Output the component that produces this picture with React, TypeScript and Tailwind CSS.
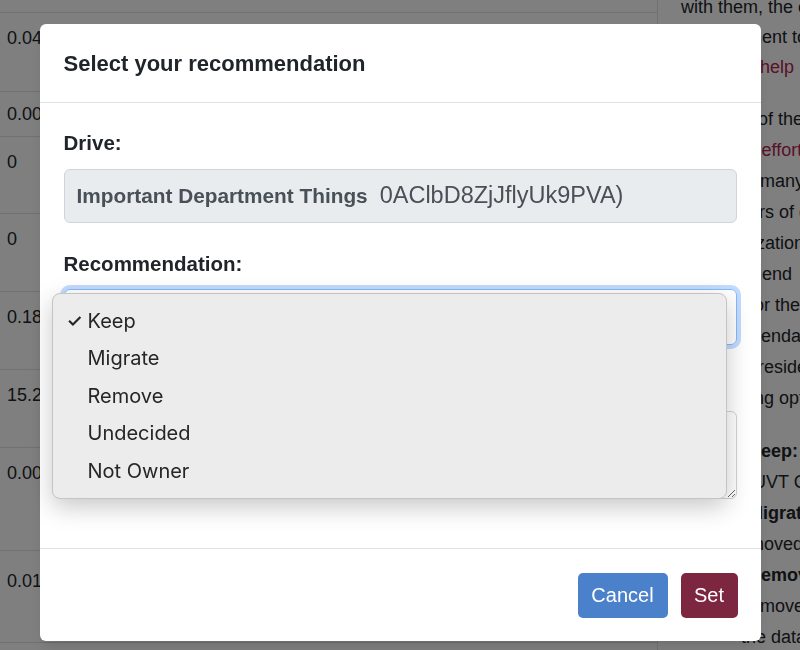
import React from "react";

const tableRows = [
  { value: "0.04", h: "h-[79px]", pt: "pt-[12px]" },
  { value: "0.00", h: "h-[45px]", pt: "pt-[9px]" },
  { value: "0", h: "h-[77px]", pt: "pt-[12px]" },
  { value: "0", h: "h-[78px]", pt: "pt-[12px]" },
  { value: "0.18", h: "h-[78px]", pt: "pt-[12px]" },
  { value: "15.2", h: "h-[78px]", pt: "pt-[12px]" },
  { value: "0.00", h: "h-[103px]", pt: "pt-[12px]" },
  { value: "0.01", h: "h-[92px]", pt: "pt-[17px]" },
];

type Line = { pre?: string; bold?: string; link?: string; indent?: boolean };

// side panel text, one entry per line
const helpParagraphs: Line[][] = [
  [
    { pre: "with them, the owners" },
    { pre: "a department to help" },
    { pre: "to ask for ", link: "help" },
  ],
  [
    { pre: "As a part of the" },
    { pre: "cleanup's ", link: "effort" },
    { pre: "for all the many" },
    { pre: "its numbers of drives" },
    { pre: "an organization" },
    { pre: "A recommend" },
    { pre: "options, for them" },
    { pre: "a recommendation" },
    { pre: "with the president" },
    { pre: "all following options" },
  ],
  [
    { pre: "Choose ", bold: "Keep:" },
    { pre: "Drive on UVT Cloud" },
    { pre: "Choose ", bold: "Migrate:" },
    { pre: "files are moved" },
    { pre: "Choose ", bold: "Remove:" },
    { pre: "this will remove" },
    { pre: "the data", indent: true },
  ],
];

const options = ["Keep", "Migrate", "Remove", "Undecided", "Not Owner"];

function BackgroundPage() {
  return (
    <div className="flex h-[650px] overflow-hidden bg-white font-['Liberation_Sans',sans-serif] text-[18px] text-[#212529]">
      <div className="w-[657px] shrink-0 pt-[12px]">
        <div className="border-t border-[#dee2e6]">
          {tableRows.map((row, i) => (
            <div key={i} className={`${row.h} ${row.pt} border-b border-[#dee2e6] pl-[7px] leading-[27px]`}>
              {row.value}
            </div>
          ))}
        </div>
      </div>
      <div className="flex-1 border-l border-[#dee2e6] pl-[23px] mt-[-8px] leading-[31px] whitespace-nowrap">
        {helpParagraphs.map((para, pi) => (
          <div key={pi} className={pi === 0 ? "mb-[22px] leading-[30px]" : "mb-[22px]"}>
            {para.map((line, li) => (
              <div key={li} className={line.indent ? "pl-[60px]" : ""}>
                {line.pre}
                {line.bold && <b>{line.bold}</b>}
                {line.link && <span className="text-[#b3244f]">{line.link}</span>}
              </div>
            ))}
          </div>
        ))}
      </div>
    </div>
  );
}

function Chevron() {
  return (
    <svg width="16" height="16" viewBox="0 0 16 16" fill="none" className="text-[#343a40]">
      <path d="M2 5l6 6 6-6" stroke="currentColor" strokeWidth="1.6" strokeLinecap="round" strokeLinejoin="round" />
    </svg>
  );
}

function RecommendationModal() {
  return (
    <div className="fixed inset-0 bg-black/50 font-['Liberation_Sans',sans-serif] text-[#212529]">
      <div className="mx-auto mt-[24px] w-[721px] rounded-[6px] bg-white shadow-lg">
        {/* header */}
        <div className="flex h-[79px] items-center border-b border-[#dee2e6] px-6">
          <h2 className="text-[22px] font-bold">Select your recommendation</h2>
        </div>

        {/* body */}
        <div className="px-6 pt-[25px] pb-[49px]">
          <label className="block text-[20.5px] font-bold leading-[30px]">Drive:</label>
          <div className="mt-[11px] flex h-[54px] items-center gap-[12px] rounded-[6px] border border-[#ced4da] bg-[#e9ecef] px-3 text-[#495057]">
            <span className="text-[20.8px] font-bold">Important Department Things</span>
            <span className="text-[23.5px]">0AClbD8ZjJflyUk9PVA)</span>
          </div>

          <label className="mt-[26px] block text-[20.5px] font-bold leading-[30px]">Recommendation:</label>
          <div className="relative mt-[10px]">
            <div className="flex h-[56px] items-center justify-between rounded-[6px] border border-[#86b7fe] px-3 text-[20px] ring-4 ring-[#0d6efd]/25">
              <span>Keep</span>
              <Chevron />
            </div>

            {/* native option popup */}
            <div className="absolute left-[-12px] top-[4px] z-10 w-[675px] rounded-[8px] border border-[#c4c4c4] bg-[#ececec] py-[8px] font-['Inter',sans-serif] text-[20px] text-[#262626] shadow-[0_8px_24px_rgba(0,0,0,0.22)]">
              {options.map((opt, i) => (
                <div key={opt} className="flex h-[37.5px] items-center">
                  <span className="w-[35px] pl-[14px] text-[18px] font-semibold">{i === 0 ? "✓" : ""}</span>
                  <span>{opt}</span>
                </div>
              ))}
            </div>
          </div>

          <label className="mt-[26px] block text-[20.5px] font-bold leading-[30px]">Comment:</label>
          <textarea className="mt-[10px] block h-[88px] w-full rounded-[6px] border border-[#ced4da] px-3 py-2 text-[20px]" />
        </div>

        {/* footer */}
        <div className="flex h-[93px] items-center justify-end gap-[13px] border-t border-[#dee2e6] px-[23px]">
          <button className="h-[45px] w-[90px] rounded-[5px] bg-[#4b80cb] text-[20px] text-white">Cancel</button>
          <button className="h-[45px] w-[57px] rounded-[5px] bg-[#7d2640] text-[20px] text-white">Set</button>
        </div>
      </div>
    </div>
  );
}

export default function App() {
  return (
    <div className="relative h-[650px] w-[800px] overflow-hidden">
      <BackgroundPage />
      <RecommendationModal />
    </div>
  );
}
